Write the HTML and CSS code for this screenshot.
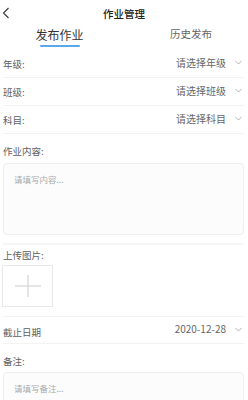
FILE: index.html
```html
<!DOCTYPE html>
<html lang="zh">
<head>
<meta charset="utf-8">
<link rel="stylesheet" href="styles.css">
</head>
<body>
<div class="page">
  <header class="topbar">
    <svg class="back" width="8" height="12" viewBox="0 0 8 12"><polyline points="6.5,1 1.5,6 6.5,11" fill="none" stroke="#333" stroke-width="1.1"/></svg>
    <div class="title">作业管理</div>
  </header>
  <nav class="tabs">
    <div class="tab active"><span>发布作业</span></div>
    <div class="tab"><span>历史发布</span></div>
  </nav>
  <section class="form">
    <div class="row">
      <span class="label">年级:</span>
      <span class="value">请选择年级<svg class="chev" width="7" height="5" viewBox="0 0 7 5"><polyline points="0.5,1 3.5,4 6.5,1" fill="none" stroke="#aaa" stroke-width="0.9"/></svg></span>
    </div>
    <div class="row">
      <span class="label">班级:</span>
      <span class="value">请选择班级<svg class="chev" width="7" height="5" viewBox="0 0 7 5"><polyline points="0.5,1 3.5,4 6.5,1" fill="none" stroke="#aaa" stroke-width="0.9"/></svg></span>
    </div>
    <div class="row">
      <span class="label">科目:</span>
      <span class="value">请选择科目<svg class="chev" width="7" height="5" viewBox="0 0 7 5"><polyline points="0.5,1 3.5,4 6.5,1" fill="none" stroke="#aaa" stroke-width="0.9"/></svg></span>
    </div>
    <div class="block content-block">
      <div class="label block-label">作业内容:</div>
      <div class="textarea tall"><div class="placeholder">请填写内容...</div></div>
    </div>
    <div class="block upload-block">
      <div class="label block-label">上传图片:</div>
      <div class="upload">
        <svg width="26" height="22" viewBox="0 0 26 22"><line x1="0" y1="11" x2="26" y2="11" stroke="#ccc" stroke-width="1"/><line x1="13" y1="0" x2="13" y2="22" stroke="#ccc" stroke-width="1"/></svg>
      </div>
    </div>
    <div class="row date-row">
      <span class="label">截止日期</span>
      <span class="value">2020-12-28<svg class="chev" width="7" height="5" viewBox="0 0 7 5"><polyline points="0.5,1 3.5,4 6.5,1" fill="none" stroke="#aaa" stroke-width="0.9"/></svg></span>
    </div>
    <div class="block note-block">
      <div class="label block-label">备注:</div>
      <div class="textarea"><div class="placeholder">请填写备注...</div></div>
    </div>
  </section>
</div>
</body>
</html>
```
FILE: styles.css
```css
* { box-sizing: border-box; }
html, body { margin: 0; padding: 0; background: #fff; }
body {
  font-family: "Noto Sans CJK SC", "Noto Sans", "Liberation Sans", sans-serif;
  color: #333;
  width: 248px;
  overflow: hidden;
}
.page { width: 248px; }
.topbar {
  position: relative;
  height: 27px;
  display: flex;
  align-items: center;
  justify-content: center;
}
.back { position: absolute; left: 2px; top: 7px; }
.title { font-size: 10.5px; font-weight: 500; color: #222; line-height: 14px; }
.tabs {
  display: grid;
  grid-template-columns: 119px 1fr;
  column-gap: 15px;
  height: 23px;
}
.tab {
  display: flex;
  justify-content: center;
  align-items: flex-start;
  font-size: 10.5px;
  color: #666;
}
.tab span { line-height: 14px; }
.tab.active { font-size: 12px; color: #333; }
.tab.active span {
  line-height: 16px;
  padding-bottom: 1px;
  position: relative;
  display: inline-block;
}
.tab.active span::after {
  content: "";
  position: absolute;
  left: 5px;
  right: 4px;
  bottom: -3px;
  height: 2px;
  background: #5aa8ec;
  border-radius: 1px;
}
.form { padding: 0 4px 0 3px; }
.row {
  height: 28px;
  border-bottom: 1px solid #f3f3f3;
  display: flex;
  align-items: center;
  justify-content: space-between;
}
.label { font-size: 9.5px; color: #606060; line-height: 12px; }
.value {
  font-size: 10px;
  color: #666;
  display: flex;
  align-items: center;
  line-height: 12px;
  margin-top: -2px;
}
.chev { margin-left: 9px; margin-right: 2px; }
.block-label { padding-top: 11px; }
.textarea {
  margin-top: 6px;
  height: 72px;
  border: 1px solid #eeeeee;
  border-radius: 4px;
  background: #fcfcfc;
  padding: 9px 10px;
  font-size: 8.5px;
  line-height: 12px;
}
.placeholder { font-size: 8.5px; color: #aaa; line-height: 12px; }
.content-block {
  padding-bottom: 8px;
  border-bottom: 2px solid #f6f6f6;
}
.upload-block {
  padding-bottom: 9px;
  border-bottom: 1px solid #f3f3f3;
}
.upload-block .block-label { padding-top: 4px; }
.upload {
  margin-top: 4px;
  margin-left: -1px;
  width: 51px;
  height: 42px;
  border: 1px solid #e8e8e8;
  display: flex;
  align-items: center;
  justify-content: center;
}
.date-row { height: 27px; }
.date-row .label { margin-top: 3px; }
.note-block .block-label { padding-top: 11px; }
.note-block .textarea { margin-top: 5px; height: 40px; }
```
